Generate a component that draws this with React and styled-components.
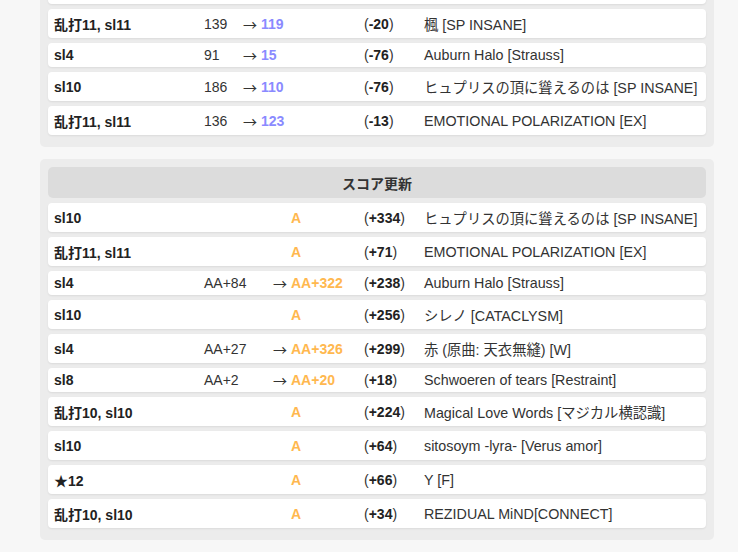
import React from "react";
import styled, { createGlobalStyle } from "styled-components";

const Global = createGlobalStyle`
  html, body { margin: 0; padding: 0; background: #f7f7f7; }
  body {
    font-family: "Liberation Sans", Arial, "Noto Sans CJK JP", sans-serif;
    font-size: 14px;
    color: #333;
    overflow: hidden;
  }
`;

const Page = styled.div`
  padding: 0 24px 0 40px;
  display: flex;
  flex-direction: column;
  gap: 12px;
  margin-top: -33px;
`;

const Panel = styled.section`
  background: #ececec;
  border-radius: 5px;
  padding: 8px 8px 12px;
  display: flex;
  flex-direction: column;
  gap: 5px;
`;

const Heading = styled.div`
  height: 31px;
  background: #dcdcdc;
  border-radius: 5px;
  display: flex;
  align-items: center;
  justify-content: center;
  font-weight: bold;
  color: #333;
`;

const Row = styled.div`
  height: ${(p) => (p.$tall ? 29 : 24)}px;
  background: #fff;
  border-radius: 4px;
  box-shadow: 0 1px 2px rgba(0, 0, 0, 0.08);
  padding-left: 6px;
  display: grid;
  grid-template-columns: ${(p) => p.$cols};
  align-items: center;
  white-space: nowrap;
`;

const Level = styled.span`
  font-weight: bold;
  color: #222;
`;

const Before = styled.span`
  color: #333;
`;

const Change = styled.span`
  color: #333;
  display: flex;
  align-items: center;
  gap: 4px;
`;

const Arrow = styled.span`
  visibility: ${(p) => (p.$hidden ? "hidden" : "visible")};
  font-family: "Noto Sans CJK JP", sans-serif;
  line-height: 1;
  color: #333;
`;

const After = styled.span`
  font-weight: bold;
  color: ${(p) => p.$color};
`;

const Diff = styled.span`
  color: #333;
  b { font-weight: bold; color: #222; }
`;

const Song = styled.span`
  color: #333;
  font-size: 14.3px;
`;

const topCols = "150px 39px 121px 60px 1fr";
const bottomCols = "150px 69px 91px 60px 1fr";

const topRows = [
  { lv: "乱打11, sl11", before: "139", after: "119", diff: "-20", song: "楓 [SP INSANE]", tall: true },
  { lv: "sl4", before: "91", after: "15", diff: "-76", song: "Auburn Halo [Strauss]", tall: false },
  { lv: "sl10", before: "186", after: "110", diff: "-76", song: "ヒュプリスの頂に聳えるのは [SP INSANE]", tall: true },
  { lv: "乱打11, sl11", before: "136", after: "123", diff: "-13", song: "EMOTIONAL POLARIZATION [EX]", tall: true },
];

const scoreRows = [
  { lv: "sl10", before: "", after: "A", diff: "+334", song: "ヒュプリスの頂に聳えるのは [SP INSANE]", tall: true },
  { lv: "乱打11, sl11", before: "", after: "A", diff: "+71", song: "EMOTIONAL POLARIZATION [EX]", tall: true },
  { lv: "sl4", before: "AA+84", after: "AA+322", diff: "+238", song: "Auburn Halo [Strauss]", tall: false },
  { lv: "sl10", before: "", after: "A", diff: "+256", song: "シレノ [CATACLYSM]", tall: true },
  { lv: "sl4", before: "AA+27", after: "AA+326", diff: "+299", song: "赤 (原曲: 天衣無縫) [W]", tall: true },
  { lv: "sl8", before: "AA+2", after: "AA+20", diff: "+18", song: "Schwoeren of tears [Restraint]", tall: false },
  { lv: "乱打10, sl10", before: "", after: "A", diff: "+224", song: "Magical Love Words [マジカル横認識]", tall: true },
  { lv: "sl10", before: "", after: "A", diff: "+64", song: "sitosoym -lyra- [Verus amor]", tall: true },
  { lv: "★12", before: "", after: "A", diff: "+66", song: "Y [F]", tall: true },
  { lv: "乱打10, sl10", before: "", after: "A", diff: "+34", song: "REZIDUAL MiND[CONNECT]", tall: true },
];

function DataRow({ r, cols, color }) {
  return (
    <Row $tall={r.tall} $cols={cols}>
      <Level>{r.lv}</Level>
      <Before>{r.before}</Before>
      <Change>
        <Arrow $hidden={!r.before}>→</Arrow>
        <After $color={color}>{r.after}</After>
      </Change>
      <Diff>
        (<b>{r.diff}</b>)
      </Diff>
      <Song>{r.song}</Song>
    </Row>
  );
}

export default function App() {
  return (
    <>
      <Global />
      <Page>
        <Panel>
          <Row $tall $cols={topCols} />
          {topRows.map((r, i) => (
            <DataRow key={i} r={r} cols={topCols} color="#8a8aff" />
          ))}
        </Panel>
        <Panel>
          <Heading>スコア更新</Heading>
          {scoreRows.map((r, i) => (
            <DataRow key={i} r={r} cols={bottomCols} color="#ffb84f" />
          ))}
        </Panel>
      </Page>
    </>
  );
}
